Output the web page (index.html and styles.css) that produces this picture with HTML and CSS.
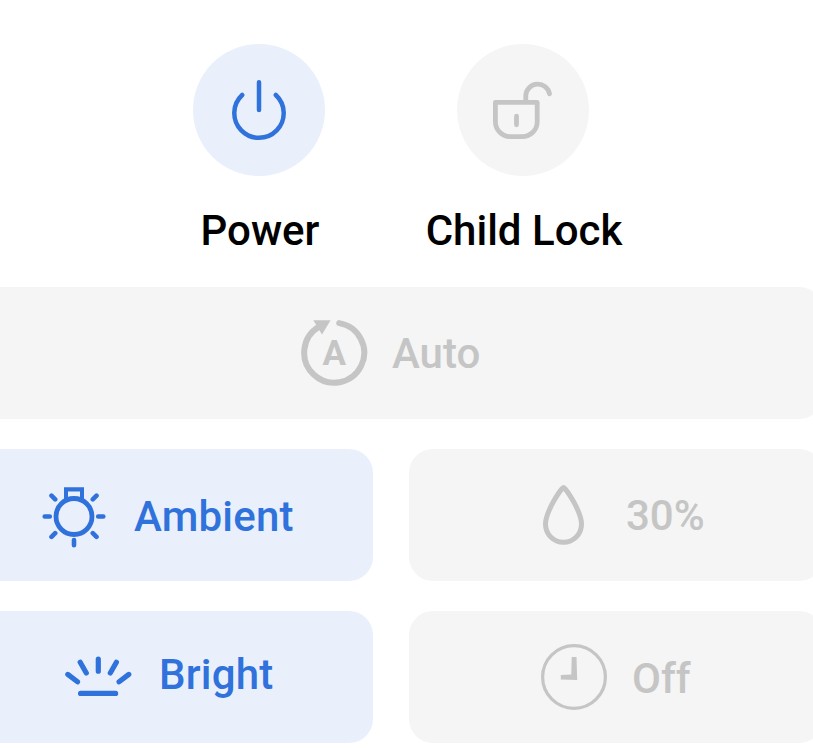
FILE: index.html
```html
<!DOCTYPE html>
<html lang="en">
<head>
<meta charset="utf-8">
<title>Device controls</title>
<link rel="stylesheet" href="styles.css">
</head>
<body>
<main class="panel">
  <div class="rounds">
    <div class="round on">
      <span class="disc"><svg width="132" height="132" viewBox="193 44 132 132"><g class="line" stroke-width="4.5"><path d="M242.2 95A24.7 24.7 0 1 0 275.8 95M259 82.3V110"/></g></svg></span>
      <span class="caption">Power</span>
    </div>
    <div class="round">
      <span class="disc"><svg width="132" height="132" viewBox="457 44 132 132"><g class="line" stroke-width="4.8"><path d="M495.4 102.3H537.2V121.7A15 15 0 0 1 522.2 136.7H510.4A15 15 0 0 1 495.4 121.7ZM525.8 102V95A12 12 0 0 1 549.5 93.8M516.5 116.2V124.8"/></g></svg></span>
      <span class="caption">Child Lock</span>
    </div>
  </div>
  <div class="cards">
    <div class="card auto">
      <svg width="68" height="68" viewBox="300 319 68 68"><path class="line" stroke-width="6" d="M339.2 323.1A30 30 0 1 1 319.2 326.7"/><path class="fill" d="M313.3 320.2H330.6L322 334.6Z"/><text class="letter" x="334.3" y="365" text-anchor="middle">A</text></svg>
      <span class="label">Auto</span>
    </div>
    <div class="card on ambient">
      <svg width="68" height="68" viewBox="40 483 68 68"><circle class="line" stroke-width="4.8" cx="74" cy="516.5" r="18"/><path class="fill" fill-rule="evenodd" d="M64 487.3H84V501H64ZM68 491.5V498H80V491.5Z"/><path class="line" stroke-width="4.6" d="M44.7 516.5H49.8M98.2 516.5H103.3M74 540V545.2M51.5 495.7L55.2 499.4M96.5 495.7L92.8 499.4M51.5 536.9L55.2 533.2M96.5 536.9L92.8 533.2"/></svg>
      <span class="label">Ambient</span>
    </div>
    <div class="card humidity">
      <svg width="48" height="64" viewBox="540 482 48 64"><path class="line" stroke-width="5" d="M563.5 486.5C565.5 486.5 581.5 510.5 581.5 523.2A18 18 0 0 1 545.5 523.2C545.5 510.5 561.5 486.5 563.5 486.5Z"/></svg>
      <span class="label">30%</span>
    </div>
    <div class="card on bright">
      <svg width="70" height="48" viewBox="63 653 70 48"><path class="line" stroke-width="5.2" d="M98.3 659V671.2M80.2 662.3L86.3 673M116.4 662.3L110.3 673M67.8 674.4L77.5 681.8M128.8 674.4L119.1 681.8M80.6 693.4H115.6"/></svg>
      <span class="label">Bright</span>
    </div>
    <div class="card timer">
      <svg width="68" height="68" viewBox="540 643 68 68"><circle class="line" stroke-width="3.2" cx="574" cy="677" r="31.4"/><path class="fill" d="M571.7 657H576.5L577.2 680L560.8 679.5V675L571.3 674.5Z"/></svg>
      <span class="label">Off</span>
    </div>
  </div>
</main>
</body>
</html>
```

FILE: styles.css
```css
* { box-sizing: border-box; }
html, body { height: 100%; }
body {
  margin: 0;
  overflow: hidden;
  background: #fff;
  color: #000;
  font: 500 42px/50px Roboto, sans-serif;
}
.panel { width: 864px; margin-left: -41px; padding-top: 44px; }
.rounds { display: flex; padding-left: 168px; }
.round {
  --ink: #c5c5c5;
  --surface: #f5f5f5;
  width: 264px;
  display: flex;
  flex-direction: column;
  align-items: center;
}
.disc {
  width: 132px;
  height: 132px;
  border-radius: 50%;
  background: var(--surface);
}
.caption { margin-top: 30px; padding-left: 2px; white-space: nowrap; }
.cards {
  display: grid;
  grid-template-columns: 414px 414px;
  column-gap: 36px;
  row-gap: 30px;
  margin-top: 31px;
}
.card {
  --ink: #c5c5c5;
  --surface: #f5f5f5;
  height: 132px;
  display: flex;
  align-items: center;
  border-radius: 24px;
  background: var(--surface);
  color: var(--ink);
}
.on { --ink: #3072dc; --surface: #e9f0fb; }
svg { display: block; flex: none; }
.line {
  fill: none;
  stroke: var(--ink);
  stroke-linecap: round;
  stroke-linejoin: round;
}
.fill { fill: var(--ink); }
.letter { fill: var(--ink); font-weight: 700; font-size: 35px; }
.auto { grid-column: 1 / -1; padding-left: 341px; }
.auto .label { margin: 2px 0 0 24px; }
.ambient { padding: 4px 0 0 81px; }
.ambient .label { margin-left: 26px; letter-spacing: 0.2px; }
.humidity { padding-left: 131px; }
.humidity .label { margin: 2px 0 0 38px; }
.bright { padding-left: 104px; }
.bright .label { margin: -5px 0 0 26px; letter-spacing: 0.2px; }
.timer { padding-left: 131px; }
.timer .label { margin: 3px 0 0 24px; }
```
